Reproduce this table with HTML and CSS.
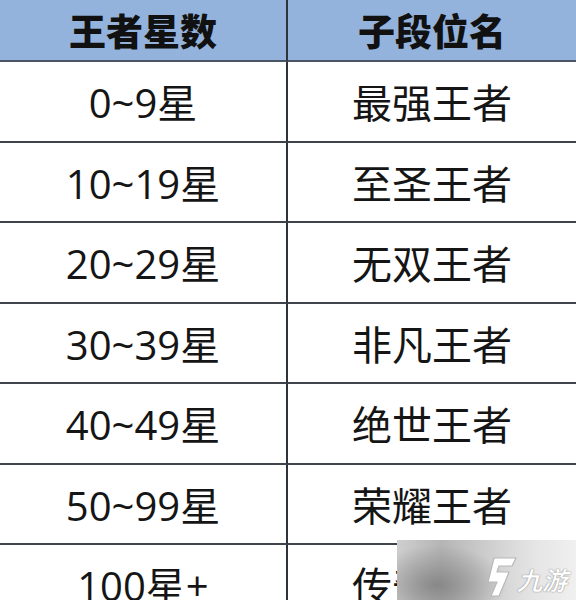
FILE: index.html
```html
<!DOCTYPE html>
<html lang="zh">
<head>
<meta charset="utf-8">
<link rel="stylesheet" href="styles.css">
</head>
<body>
<div class="page">
  <div class="grid">
    <div class="cell head left">王者星数</div>
    <div class="cell head">子段位名</div>
    <div class="cell left">0~9星</div>
    <div class="cell">最强王者</div>
    <div class="cell left">10~19星</div>
    <div class="cell">至圣王者</div>
    <div class="cell left">20~29星</div>
    <div class="cell">无双王者</div>
    <div class="cell left">30~39星</div>
    <div class="cell">非凡王者</div>
    <div class="cell left">40~49星</div>
    <div class="cell">绝世王者</div>
    <div class="cell left">50~99星</div>
    <div class="cell">荣耀王者</div>
    <div class="cell left">100星+</div>
    <div class="cell">传奇王者</div>
  </div>
  <div class="watermark">
    <div class="blur"></div>
    <svg class="logo" width="34" height="44" viewBox="0 0 34 44">
      <path d="M10 3 L32 3 L28 11 L15 11 L13 17 L25 17 L21 27 L15 41 L7 41 L13 27 L4 27 Z" fill="#ffffff" stroke="#b8b8b8" stroke-width="1.2" stroke-linejoin="round"/>
    </svg>
    <span class="brand">九游</span>
  </div>
</div>
</body>
</html>
```
FILE: styles.css
```css
html, body {
  margin: 0;
  padding: 0;
  background: #ffffff;
}
.page {
  position: relative;
  width: 576px;
  height: 600px;
  overflow: hidden;
}
.grid {
  display: grid;
  grid-template-columns: 288px 1fr;
  font-family: "Open Sans", "Noto Sans CJK SC", sans-serif;
  color: #151515;
}
.cell {
  height: 78.5px;
  border-bottom: 2px solid #3f444c;
  display: flex;
  align-items: center;
  justify-content: center;
  font-size: 40px;
  font-weight: 400;
  background: #ffffff;
}
.cell.left {
  border-right: 2px solid #2f343b;
}
.cell.head {
  height: 60px;
  background: #94b3dc;
  font-family: "Noto Sans CJK SC", sans-serif;
  font-weight: 900;
  font-size: 37px;
  color: #111111;
  border-bottom-color: #4a5566;
}
.watermark {
  position: absolute;
  left: 397px;
  top: 540px;
  width: 179px;
  height: 60px;
  overflow: hidden;
  background: #e6e6e6;
}
.blur {
  position: absolute;
  inset: 0;
  background:
    radial-gradient(ellipse 70px 40px at 40px 45px, rgba(120,120,120,0.75), rgba(160,160,160,0) 100%),
    linear-gradient(90deg, #cfcfcf 0%, #b5b5b5 25%, #cdcdcd 50%, #e4e4e4 75%, #f0f0f0 100%);
}
.logo {
  position: absolute;
  left: 87px;
  top: 15px;
}
.brand {
  position: absolute;
  left: 123px;
  top: 24px;
  font-family: "Noto Sans CJK SC", sans-serif;
  font-size: 25px;
  line-height: 30px;
  font-weight: 500;
  color: #ffffff;
  transform: skewX(-15deg);
  text-shadow: 0 0 1px #8f8f8f, 0 0 2px #a5a5a5;
}
```
